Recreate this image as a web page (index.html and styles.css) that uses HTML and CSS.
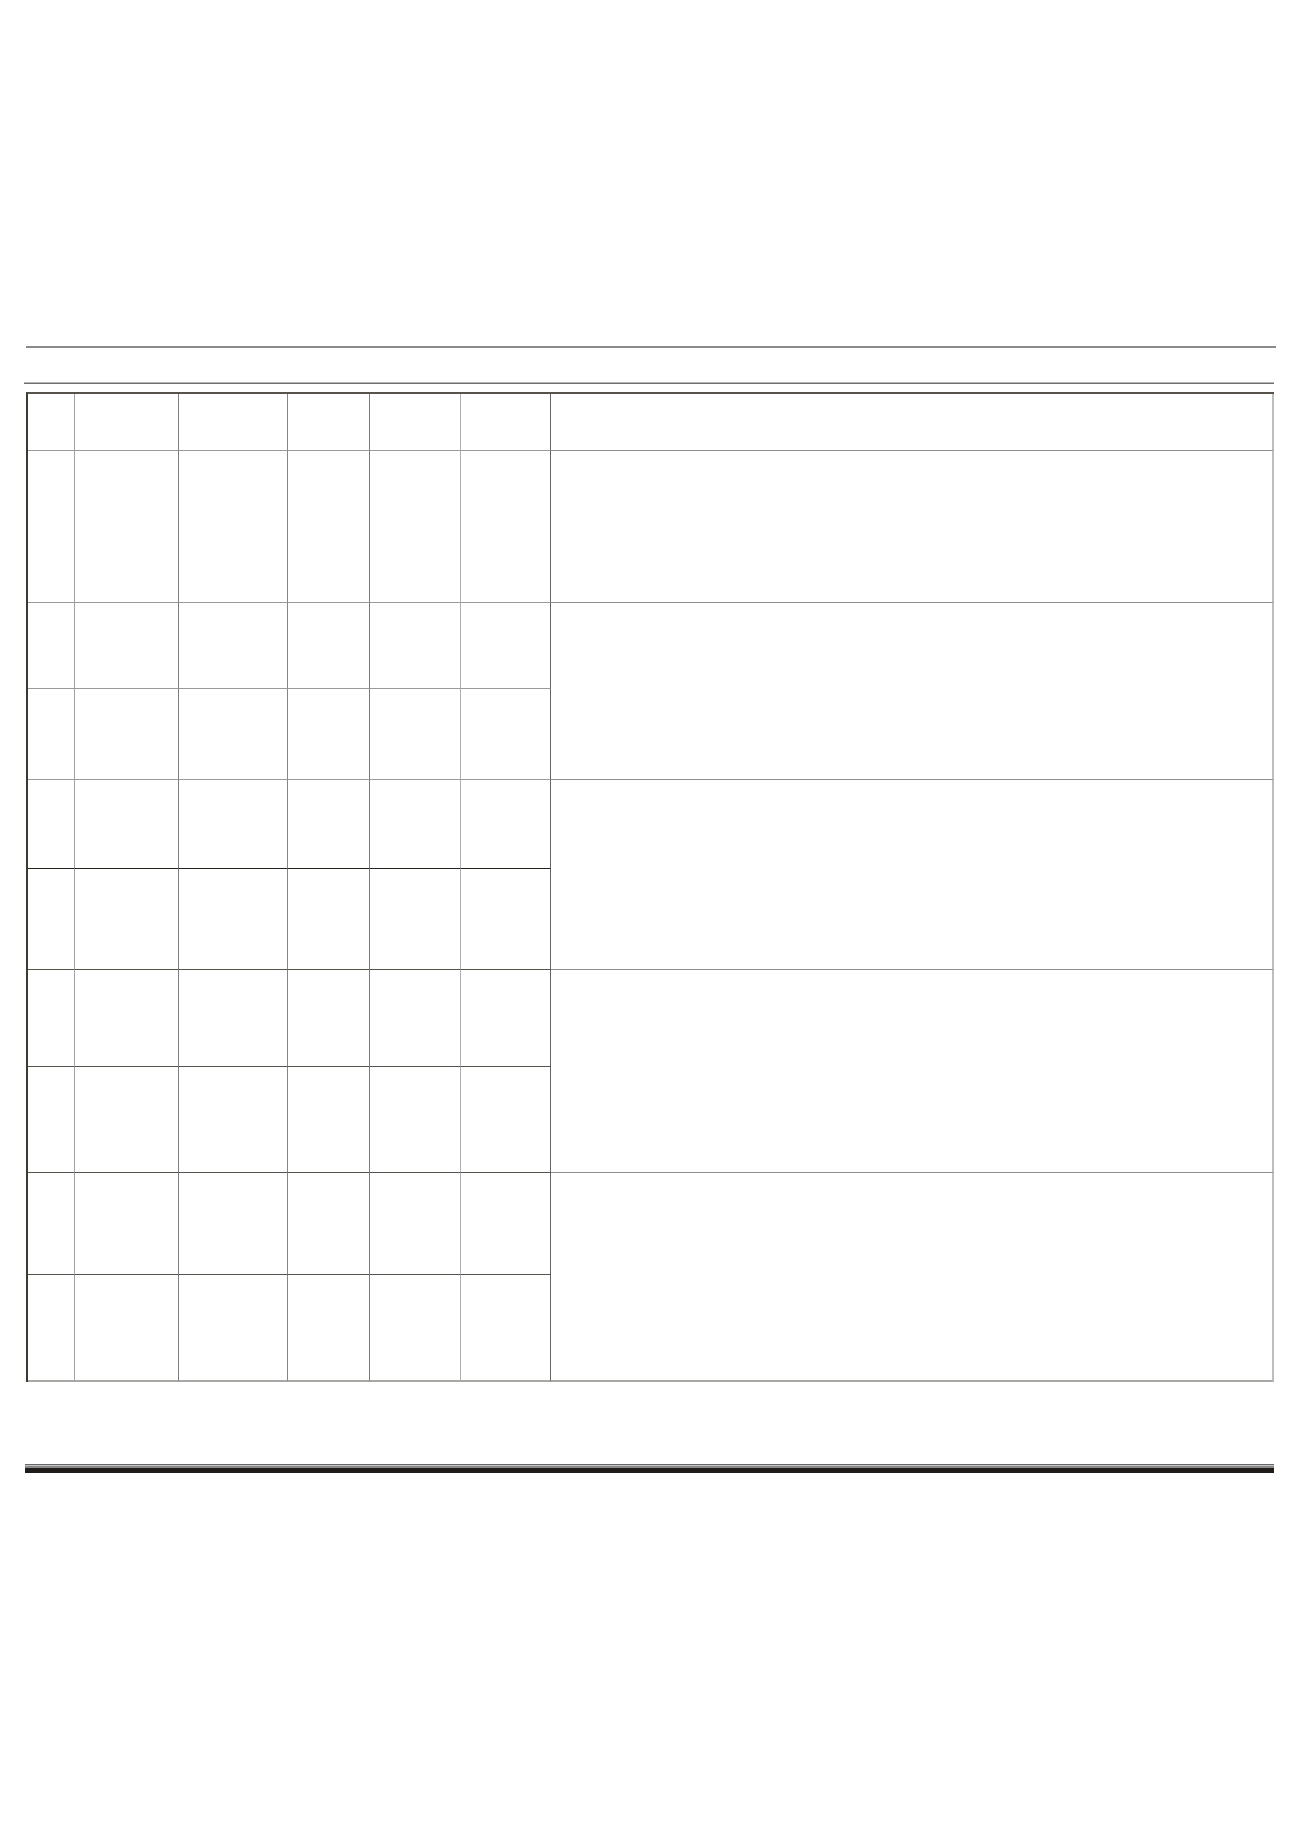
FILE: index.html
```html
<!DOCTYPE html>
<html lang="en">
<head>
<meta charset="utf-8">
<title>Table</title>
<link rel="stylesheet" href="styles.css">
</head>
<body>
<div class="doc">
  <div class="rule-top"></div>
  <div class="rule-second"></div>
  <table class="grid">
    <colgroup>
      <col class="c1"><col class="c2"><col class="c3"><col class="c4"><col class="c5"><col class="c6"><col class="c7">
    </colgroup>
    <tr class="r-head">
      <td class="v1"></td><td class="v2"></td><td class="v3"></td><td class="v4"></td><td class="v5"></td><td class="v6"></td><td class="v7"></td>
    </tr>
    <tr class="r1">
      <td class="v1"></td><td class="v2"></td><td class="v3"></td><td class="v4"></td><td class="v5"></td><td class="v6"></td><td class="v7"></td>
    </tr>
    <tr class="r2">
      <td class="v1"></td><td class="v2"></td><td class="v3"></td><td class="v4"></td><td class="v5"></td><td class="v6"></td><td class="v7" rowspan="2"></td>
    </tr>
    <tr class="r3">
      <td class="v1"></td><td class="v2"></td><td class="v3"></td><td class="v4"></td><td class="v5"></td><td class="v6"></td>
    </tr>
    <tr class="r4 dark-bottom">
      <td class="v1"></td><td class="v2"></td><td class="v3"></td><td class="v4"></td><td class="v5"></td><td class="v6"></td><td class="v7" rowspan="2"></td>
    </tr>
    <tr class="r5 mid-bottom">
      <td class="v1"></td><td class="v2"></td><td class="v3"></td><td class="v4"></td><td class="v5"></td><td class="v6"></td>
    </tr>
    <tr class="r6 mid-bottom">
      <td class="v1"></td><td class="v2"></td><td class="v3"></td><td class="v4"></td><td class="v5"></td><td class="v6"></td><td class="v7" rowspan="2"></td>
    </tr>
    <tr class="r7 mid-bottom">
      <td class="v1"></td><td class="v2"></td><td class="v3"></td><td class="v4"></td><td class="v5"></td><td class="v6"></td>
    </tr>
    <tr class="r8 mid-bottom">
      <td class="v1"></td><td class="v2"></td><td class="v3"></td><td class="v4"></td><td class="v5"></td><td class="v6"></td><td class="v7 last" rowspan="2"></td>
    </tr>
    <tr class="r9 last-row">
      <td class="v1"></td><td class="v2"></td><td class="v3"></td><td class="v4"></td><td class="v5"></td><td class="v6"></td>
    </tr>
  </table>
  <div class="rule-bottom">
    <div class="rb-a"></div>
    <div class="rb-b"></div>
    <div class="rb-c"></div>
    <div class="rb-d"></div>
  </div>
</div>
</body>
</html>
```

FILE: styles.css
```css
html, body {
  margin: 0;
  padding: 0;
  background: #ffffff;
  font-family: "Liberation Sans", Arial, sans-serif;
}

.doc {
  margin-left: 24px;
  width: 1252px;
  padding-top: 346px;
}

.rule-top {
  margin-left: 2px;
  width: 1250px;
  height: 2px;
  background: #8a8a8a;
}

.rule-second {
  margin-top: 34px;
  width: 1250px;
  height: 0;
  border-top: 1px solid #b4b4b4;
  border-bottom: 1px solid #6e6e6e;
}

.grid {
  margin-top: 8px;
  margin-left: 2px;
  width: 1248px;
  table-layout: fixed;
  border-collapse: separate;
  border-spacing: 0;
  border-top: 2px solid #57534b;
  border-left: 2px solid #3d3a33;
}

.grid td {
  box-sizing: border-box;
  padding: 0;
  border-right: 1px solid #888888;
  border-bottom: 1px solid #9a9a9a;
}

.c1 { width: 47px; }
.c2 { width: 104px; }
.c3 { width: 109px; }
.c4 { width: 82px; }
.c5 { width: 91px; }
.c6 { width: 90px; }
.c7 { width: 723px; }

.grid td.v1 { border-right-color: #a2a2a2; }
.grid td.v2 { border-right-color: #7e7e7e; }
.grid td.v3 { border-right-color: #858585; }
.grid td.v4 { border-right-color: #7a7a7a; }
.grid td.v5 { border-right-color: #b0b0b0; }
.grid td.v6 { border-right-color: #66645e; }
.grid td.v7 {
  border-right: 2px solid #bdbdbd;
  border-bottom-color: #8e8e8e;
}

.r-head { height: 57px; }
.r1 { height: 152px; }
.r2 { height: 86px; }
.r3 { height: 91px; }
.r4 { height: 89px; }
.r5 { height: 101px; }
.r6 { height: 97px; }
.r7 { height: 106px; }
.r8 { height: 102px; }
.r9 { height: 107px; }

.dark-bottom td { border-bottom-color: #26221c; }
.dark-bottom td.v7 { border-bottom-color: #8e8e8e; }
.mid-bottom td { border-bottom-color: #55524b; }
.mid-bottom td.v7 { border-bottom-color: #8e8e8e; }
.last-row td,
.grid td.last { border-bottom: 2px solid #a8a8a4; }

.rule-bottom {
  margin-top: 82px;
  margin-left: 1px;
  width: 1249px;
  display: flex;
  flex-direction: column;
}

.rb-a { height: 1px; background: #666666; }
.rb-b { height: 1px; background: #c4c4c4; }
.rb-c { height: 2px; background: #888888; }
.rb-d { height: 5px; background: #1f1c1a; }
```
